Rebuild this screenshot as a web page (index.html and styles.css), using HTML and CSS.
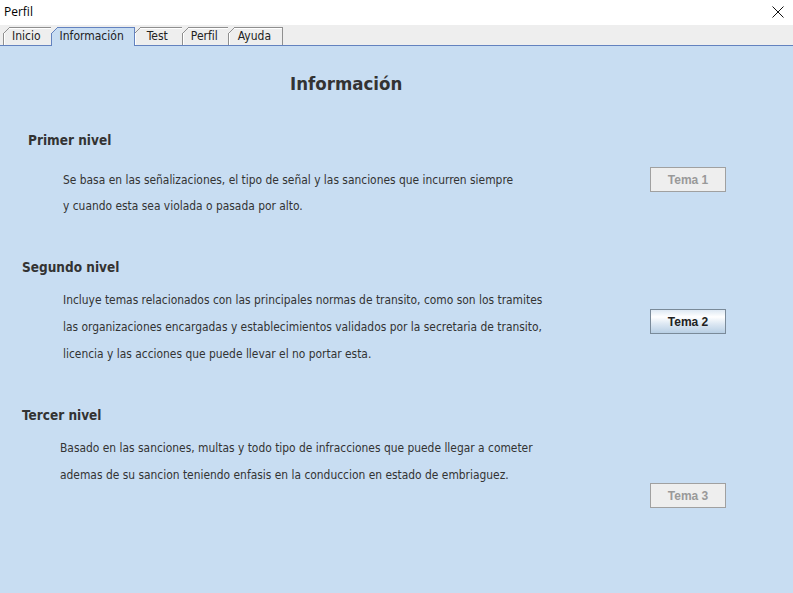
FILE: index.html
```html
<!DOCTYPE html>
<html lang="es">
<head>
<meta charset="utf-8">
<title>Perfil</title>
<link rel="stylesheet" href="styles.css">
</head>
<body>
<div class="window">
  <div class="titlebar">
    <span class="title">Perfil</span>
    <svg class="close" width="12" height="12" viewBox="0 0 12 12"><path d="M0.5 0.5 L11.5 11.5 M11.5 0.5 L0.5 11.5" stroke="#111" stroke-width="1" fill="none"/></svg>
  </div>
  <div class="tabstrip">
    <div class="tab">Inicio</div>
    <div class="tab selected">Información</div>
    <div class="tab tab-wide">Test</div>
    <div class="tab">Perfil</div>
    <div class="tab tab-last">Ayuda</div>
  </div>
  <div class="content">
    <h1 class="page-title">Información</h1>

    <section class="level level-1">
      <h2 class="level-title">Primer nivel</h2>
      <div class="level-row">
        <div class="level-text">
          <p class="line">Se basa en las señalizaciones, el tipo de señal y las sanciones que incurren siempre</p>
          <p class="line">y cuando esta sea violada o pasada por alto.</p>
        </div>
        <button class="btn" disabled>Tema 1</button>
      </div>
    </section>

    <section class="level level-2">
      <h2 class="level-title">Segundo nivel</h2>
      <div class="level-row">
        <div class="level-text">
          <p class="line">Incluye temas relacionados con las principales normas de transito, como son los tramites</p>
          <p class="line">las organizaciones encargadas y establecimientos validados por la secretaria de transito,</p>
          <p class="line">licencia y las acciones que puede llevar el no portar esta.</p>
        </div>
        <button class="btn">Tema 2</button>
      </div>
    </section>

    <section class="level level-3">
      <h2 class="level-title">Tercer nivel</h2>
      <div class="level-row">
        <div class="level-text">
          <p class="line">Basado en las sanciones, multas y todo tipo de infracciones que puede llegar a cometer</p>
          <p class="line">ademas de su sancion teniendo enfasis en la conduccion en estado de embriaguez.</p>
        </div>
        <button class="btn" disabled>Tema 3</button>
      </div>
    </section>
  </div>
</div>
</body>
</html>
```

FILE: styles.css
```css
* { box-sizing: border-box; }
html, body { margin: 0; padding: 0; }
body {
  width: 793px;
  height: 593px;
  overflow: hidden;
  font-family: "DejaVu Sans Condensed", "DejaVu Sans", sans-serif;
  font-stretch: condensed;
  color: #333333;
}
.window {
  display: flex;
  flex-direction: column;
  height: 593px;
  background: #ffffff;
}
.titlebar {
  height: 25px;
  display: flex;
  align-items: center;
  justify-content: space-between;
  padding: 0 9px 0 4px;
  background: #ffffff;
}
.title {
  font-family: "Open Sans", "Noto Sans", sans-serif;
  font-stretch: normal;
  font-size: 12px;
  color: #000;
  margin-top: -2px;
}
.close { display: block; margin-top: -1px; }
.tabstrip {
  height: 21px;
  display: flex;
  align-items: flex-end;
  padding-left: 3px;
  background: #eeeeee;
  border-bottom: 1px solid #6382bf;
}
.tab {
  position: relative;
  height: 18px;
  margin-right: -1px;
  padding: 0 10px 0 8px;
  border: 1px solid #8f8f8f;
  border-bottom: none;
  background: #eeeeee;
  box-shadow: inset 1px 1px 0 #ffffff;
  font-size: 12px;
  line-height: 17px;
  color: #222;
}
.tab-wide { padding: 0 14px 0 12px; }
.tab-last { padding: 0 11px 0 9px; }
.tab::before {
  content: "";
  position: absolute;
  top: -1px;
  left: -1px;
  width: 7px;
  height: 7px;
  background: linear-gradient(to bottom right, #eeeeee 0 calc(50% - 0.6px), #8f8f8f calc(50% - 0.6px) calc(50% + 0.6px), transparent calc(50% + 0.6px));
}
.tab.selected {
  background: #c8ddf2;
  border-color: #6382bf;
  z-index: 1;
  margin-bottom: -1px;
  height: 19px;
  box-shadow: none;
}
.tab.selected::before {
  background: linear-gradient(to bottom right, #eeeeee 0 calc(50% - 0.6px), #6382bf calc(50% - 0.6px) calc(50% + 0.6px), transparent calc(50% + 0.6px));
}
.content {
  flex: 1;
  background: #c8ddf2;
  padding-top: 25px;
}
.page-title {
  margin: 0 0 0 290px;
  font-size: 18.5px;
  line-height: 25px;
  font-weight: bold;
  color: #333333;
}
.level-title {
  margin: 0;
  font-size: 13.5px;
  line-height: 20px;
  font-weight: bold;
  color: #333333;
}
.level-1 { margin-top: 34px; }
.level-1 .level-title { padding-left: 28px; }
.level-1 .level-row { margin-top: 17px; }
.level-1 .line { line-height: 26px; }
.level-2 { margin-top: 38px; }
.level-2 .level-title { padding-left: 22px; }
.level-2 .level-row { margin-top: 10px; }
.level-2 .btn { margin-top: 22px; }
.level-3 { margin-top: 37px; }
.level-3 .level-title { padding-left: 22px; }
.level-3 .level-row { margin-top: 10px; padding-left: 60px; }
.level-3 .btn { margin-top: 48px; }
.level-row {
  display: flex;
  align-items: flex-start;
  padding-left: 63px;
  padding-right: 67px;
}
.level-text { flex: 1; }
.line {
  margin: 0;
  font-size: 11.9px;
  line-height: 27px;
  white-space: nowrap;
}
.btn {
  flex: none;
  width: 76px;
  height: 25px;
  padding: 0;
  border: 1px solid #7a8a99;
  background: linear-gradient(#dde8f3 0%, #ffffff 30%, #dde8f3 60%, #b8cfe5 100%);
  font-family: "Liberation Sans", Arial, sans-serif;
  font-stretch: normal;
  font-weight: bold;
  font-size: 12px;
  color: #222222;
}
.btn:disabled {
  background: #eeeeee;
  border-color: #a0a0a0;
  color: #999999;
}
```
